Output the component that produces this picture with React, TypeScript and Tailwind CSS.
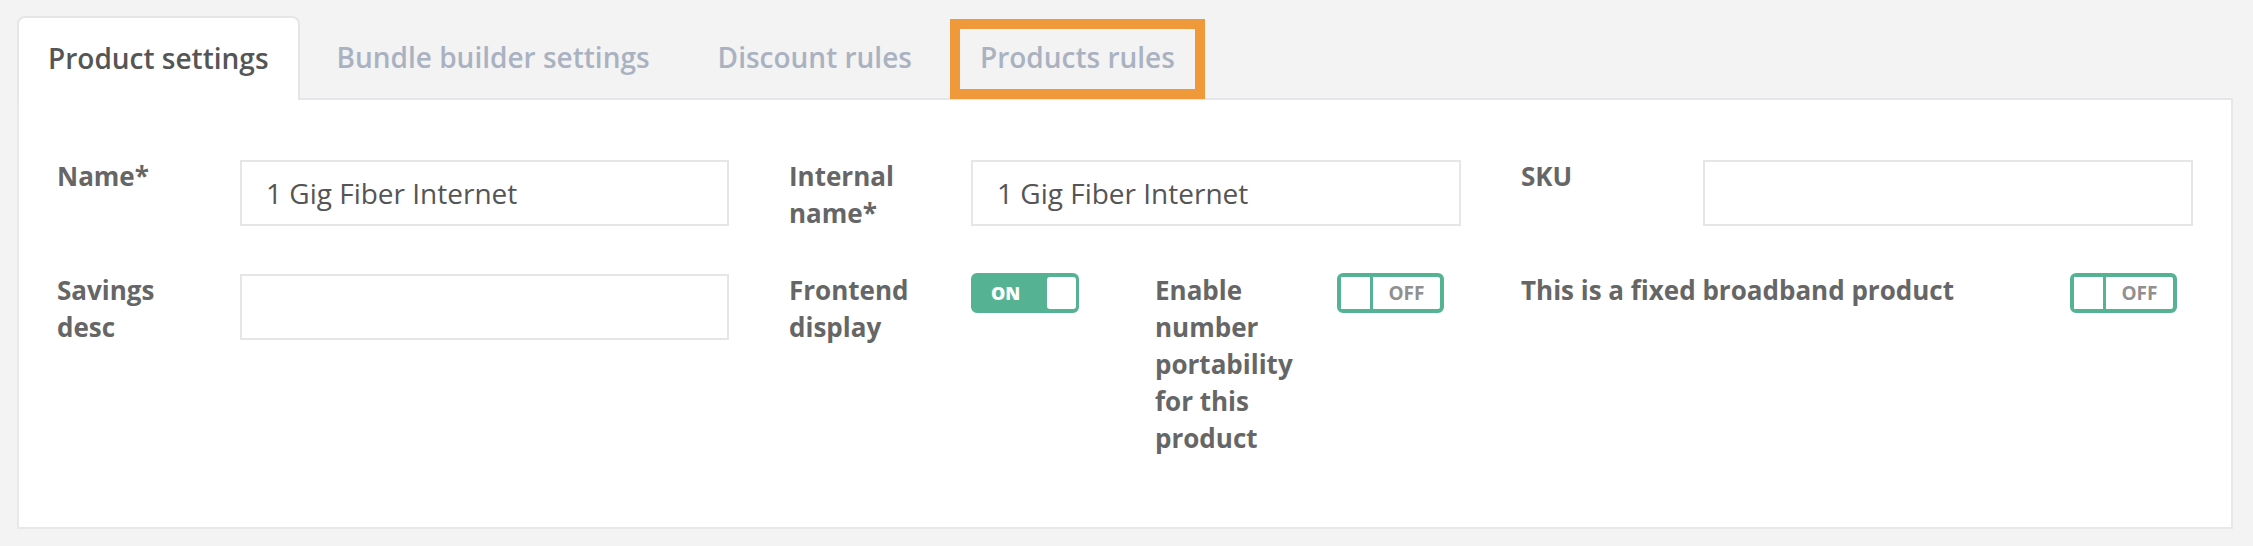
const tabs = ["Product settings", "Bundle builder settings", "Discount rules", "Products rules"]

function Toggle({ on }: { on: boolean }) {
  if (on) {
    return (
      <div className="mt-[1px] flex h-[40px] w-[108px] items-stretch rounded-[6px] border-[4px] border-r-[3px] border-[#55b394] bg-[#55b394]">
        <span className="flex flex-1 items-center pl-[16px] text-[18px] font-extrabold leading-none text-white">ON</span>
        <span className="w-[29px] rounded-[3px] bg-white" />
      </div>
    )
  }
  return (
    <div className="mt-[1px] flex h-[40px] w-[107px] items-stretch rounded-[6px] border-[4px] border-[#55b394] bg-white">
      <span className="w-[32px] border-r-[3px] border-[#55b394] bg-white" />
      <span className="flex flex-1 items-center justify-center text-[19px] font-bold leading-none text-[#909090]">OFF</span>
    </div>
  )
}

function Label({ children }: { children: React.ReactNode }) {
  return <div className="pr-[30px] text-[26px] font-bold leading-[37px] text-[#666]">{children}</div>
}

function TextField({ value }: { value?: string }) {
  return (
    <div className="mt-[2px] flex h-[66px] items-center border-2 border-[#e6e6e6] bg-white px-[24px] text-[28px] text-[#555]">
      {value}
    </div>
  )
}

export default function App() {
  return (
    <div className="min-h-screen bg-[#f3f3f3] pl-[17px] pr-[20px] pt-[16px] font-['Open_Sans',sans-serif]">
      <div className="flex items-end gap-[6px]">
        {tabs.map((t, i) =>
          i === 0 ? (
            <div
              key={t}
              className="relative z-10 -mb-[2px] flex h-[84px] items-center rounded-t-[8px] border-2 border-b-0 border-[#e6e6e6] bg-white px-[29px] pb-[2px] text-[28px] font-semibold text-[#555]"
            >
              {t}
            </div>
          ) : (
            <div key={t} className="relative flex h-[82px] items-center px-[31px] text-[28px] font-semibold text-[#aab2c1]">
              {t}
              {i === 3 && (
                <span className="absolute inset-x-[1px] top-[3px] -bottom-[1px] z-20 border-[10px] border-[#f0993a]" />
              )}
            </div>
          )
        )}
      </div>

      <div className="border-2 border-[#e8e8e8] border-t-[#e3e7eb] bg-white px-[38px] pb-[70px] pt-[58px]">
        <div className="grid grid-cols-3 gap-x-[60px] gap-y-[40px]">
          <div className="grid grid-cols-[183px_1fr] items-start">
            <Label>Name*</Label>
            <TextField value="1 Gig Fiber Internet" />
          </div>
          <div className="grid grid-cols-[182px_1fr] items-start">
            <Label>Internal name*</Label>
            <TextField value="1 Gig Fiber Internet" />
          </div>
          <div className="grid grid-cols-[182px_1fr] items-start">
            <Label>SKU</Label>
            <TextField />
          </div>

          <div className="grid grid-cols-[183px_1fr] items-start">
            <Label>Savings desc</Label>
            <TextField />
          </div>
          <div className="grid grid-cols-[366px_1fr] items-start">
            <div className="grid grid-cols-[182px_auto] items-start justify-start">
              <Label>Frontend display</Label>
              <Toggle on />
            </div>
            <div className="grid grid-cols-[182px_auto] items-start justify-start">
              <Label>Enable number portability for this product</Label>
              <Toggle on={false} />
            </div>
          </div>
          <div className="flex items-start justify-between pr-[16px]">
            <Label>This is a fixed broadband product</Label>
            <Toggle on={false} />
          </div>
        </div>
      </div>
    </div>
  )
}
